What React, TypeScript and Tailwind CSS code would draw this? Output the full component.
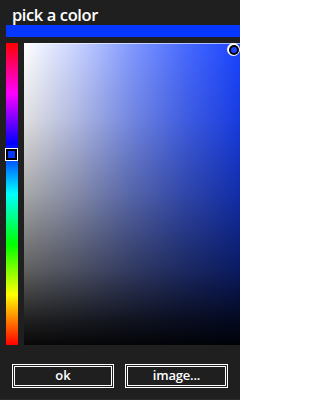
import React from "react";

export default function App() {
  return (
    <div
      className="w-[240px] h-[400px] bg-[#1f1f1f] flex flex-col text-white overflow-hidden border-b border-[#2c2c2c]"
      style={{ fontFamily: '"Open Sans", "Noto Sans", sans-serif' }}
    >
      <div className="h-[25px] pl-[12px] pt-[5px] text-[16.5px] leading-[20px] font-semibold tracking-[-0.4px]">
        pick a color
      </div>
      <div className="ml-[6px] h-[12px] bg-[#0537ff]" />
      <div className="mt-[6px] h-[302px] flex">
        <div className="ml-[6px] w-[12px] relative">
          <div className="absolute inset-0 bg-[linear-gradient(to_bottom,#ff0000_0%,#ff00ff_16.67%,#0000ff_33.33%,#00ffff_50%,#00ff00_66.67%,#ffff00_83.33%,#ff0000_100%)]" />
          <div className="absolute left-[-1px] top-[105px] w-[13px] h-[13px] border border-white bg-black p-[2px]">
            <div className="w-full h-full bg-[#0537ff]" />
          </div>
        </div>
        <div className="ml-[6px] flex-1 relative bg-[#1a44ff]">
          <div className="absolute inset-0 bg-[linear-gradient(to_right,#ffffff_0%,rgba(255,255,255,0.75)_25%,rgba(255,255,255,0.45)_50%,rgba(255,255,255,0.2)_75%,rgba(255,255,255,0)_100%)]" />
          <div className="absolute inset-0 bg-[linear-gradient(to_bottom,rgba(0,0,0,0)_0%,rgba(0,0,0,0.12)_25%,rgba(0,0,0,0.34)_50%,rgba(0,0,0,0.62)_75%,rgba(0,0,0,0.88)_92%,rgba(0,0,0,0.97)_100%)]" />
          <div className="absolute left-0 right-0 top-0 h-px bg-white/60" />
          <div className="absolute left-[203px] top-[0px] w-[13px] h-[13px] rounded-full bg-white p-[1.5px]">
            <div className="w-full h-full rounded-full bg-black p-[2px]">
              <div className="w-full h-full rounded-full bg-[#1a44ff]" />
            </div>
          </div>
        </div>
      </div>
      <div className="mt-[19px] flex gap-[11px] px-[12px]">
        <button className="w-[102px] h-[24px] border-[3px] border-double border-white bg-[#1f1f1f] text-[13px] leading-none font-semibold text-white flex items-center justify-center pb-[1px]">
          ok
        </button>
        <button className="w-[103px] h-[24px] border-[3px] border-double border-white bg-[#1f1f1f] text-[13px] leading-none font-semibold text-white flex items-center justify-center pb-[1px] tracking-[-0.2px]">
          image...
        </button>
      </div>
    </div>
  );
}
